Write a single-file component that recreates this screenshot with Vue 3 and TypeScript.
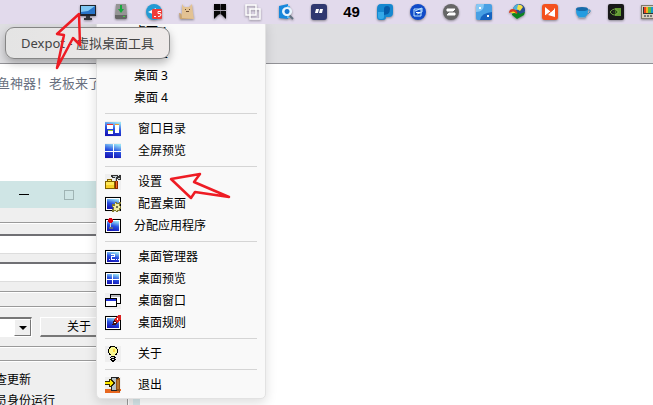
<script setup lang="ts">
type Shape = { d: string; f?: string; s?: string; w?: number }
type MenuEntry = { label: string; icon?: string; near?: boolean }

const screen: Shape[] = [
  { d: 'M0 1h16v14H0z', f: '#000' },
  { d: 'M1 2h14v12H1z', f: '#fff' },
  { d: 'M2 3h12v10H2z', f: 'url(#blue)' },
]

const icons: Record<string, Shape[]> = {
  windows: [
    { d: 'M0 1h16v14H0z', f: 'url(#blue)' },
    { d: 'M2 4h6v4H2zM3 9h5v4H3zM10 4h4v8h-4z', f: '#fff' },
    { d: 'M2 3h6v1H2z', f: '#e83030' },
    { d: 'M3 9h5v1H3z', f: '#9ac828' },
    { d: 'M10 3h4v1h-4z', f: '#f0a030' },
  ],
  grid: [
    { d: 'M0 1h16v14H0z', f: 'url(#blue)' },
    { d: 'M8 1h1v14H8zM0 8h16v1H0z', f: '#fff' },
  ],
  tools: [
    { d: 'M0 7h2V5h5v2h3v8H0z', f: '#806000' },
    { d: 'M1 8h8v6H1zM3 6h3v1H3z', f: '#ffe858' },
    { d: 'M1 11h8v3H1z', f: '#f8d028' },
    { d: 'M6 1h6l2 2V1h2v5h-3V5h-1v3h-2V4H7z', f: '#333' },
    { d: 'M8 2h4v1H8zM10 3h1v4h-1zM13 4h2v1h-2z', f: '#c0ccd0' },
    { d: 'M10 7h3v8h-3z', f: '#8c2800' },
    { d: 'M11 7h1v7h-1z', f: '#f06820' },
  ],
  configure: [
    ...screen,
    { d: 'M10 6h2v1h2V6h2v2h-1v2h1v3h-1v2h-2v1h-2v-1H9v1H7v-3h1v-2H7V8h3z', f: '#807a30' },
    { d: 'M10 7h1v1h3v2h1v2h-1v2h-2v1h-1v-1H9v-3H8v-1h2z', f: '#f0eca0' },
    { d: 'M11 10h2v2h-2z', f: '#707050' },
  ],
  assign: [
    ...screen,
    { d: 'M5 4h1v6H5z', f: '#d0d8e0' },
    { d: 'M4 9h4v2H4z', f: '#606878' },
    { d: 'M4 0h3v1h1v3H7v1H4V4H3V1h1z', f: '#e00010' },
  ],
  manager: [
    ...screen,
    { d: 'M4 10h1v1H4zM6 5h4v3H7v2h3v1H6V7h3V6H6zM11 10h1v1h-1zM13 10h1v1h-1z', f: '#fff' },
  ],
  preview: [...screen, { d: 'M7 3h1v10H7zM2 8h12v1H2z', f: '#fff' }],
  stack: [
    { d: 'M5 1h11v10H5z', f: '#000' },
    { d: 'M6 2h9v8H6z', f: '#fff' },
    { d: 'M6 2h9v2H6z', f: '#bbb' },
    { d: 'M0 5h12v9H0z', f: '#000' },
    { d: 'M1 6h10v7H1z', f: '#fff' },
    { d: 'M1 6h10v2H1z', f: '#2030d8' },
  ],
  rules: [
    ...screen,
    { d: 'M13 0h3v4l-4 4-3-3z', f: '#d82020' },
    { d: 'M9 5l3 3-1 2H7z', f: '#401010' },
    { d: 'M9 7h2v1H9zM12 3h1v2h-1z', f: '#fff' },
  ],
  bulb: [
    { d: 'M5 0h5v1h2v2h1v4h-1v2h-2v2h1v1h-1v1h1v1h-1v1H9v1H7v-1H6v-1H5v-1h1v-1H5v-1h1V9H4V7H3V3h1V1h1z', f: '#000' },
    { d: 'M6 1h4v1h1v1h1v4h-1v1h-1v2H6V8H5V7H4V3h1V2h1z', f: '#f8f890' },
    { d: 'M8 3h2v3H8z', f: '#ffd840' },
    { d: 'M6 11h3v1H6zM7 13h2v1H7z', f: '#ddd' },
  ],
  exit: [
    { d: 'M0 12h16l-1 4H0z', f: '#e86820' },
    { d: 'M6 0h8v14H6z', f: '#222' },
    { d: 'M7 1h4v12H7z', f: '#b8c4c8' },
    { d: 'M11 2l4-1v14l-4-2z', f: '#905018' },
    { d: 'M12 3h2v9h-2z', f: '#b87830' },
    { d: 'M0 4h4V2h2l4 4-4 4H4V8H0z', f: '#302800' },
    { d: 'M0 5h5V3l3 3-3 3V7H0z', f: '#ffe800' },
  ],
}

const tray: { name: string; shapes: Shape[]; text?: string }[] = [
  {
    name: 'Dexpot',
    shapes: [
      { d: 'M0 1h16v11H0z', f: '#20242c' },
      { d: 'M1 2h14v8H1z', f: '#2874c8' },
      { d: 'M1 2h14L8 7 1 8z', f: '#80c8f4' },
      { d: 'M6 12h4v2h2v2H4v-2h2z', f: '#30343a' },
    ],
  },
  {
    name: 'Disk',
    shapes: [
      { d: 'M3 0h10l1 11H2z', f: '#959595' },
      { d: 'M2 11h12v3l-1 1H3l-1-1z', f: '#666' },
      { d: 'M7 1h2v4h2L8 9 5 5h2z', f: '#18a840' },
      { d: 'M10 12h2v1h-2z', f: '#4c4' },
    ],
  },
  {
    name: 'Telegram',
    shapes: [
      { d: 'M8 0a8 8 0 1 0 0 16A8 8 0 1 0 8 0z', f: '#249bd4' },
      { d: 'M2 8l8-4-1 7z', f: '#fff' },
      { d: 'M7 5h8q1 0 1 1v8q0 1-1 1H7q-1 0-1-1V6q0-1 1-1z', f: '#f03c38' },
      { d: 'M8 12.500h2M15 7.500h-3v2h2q1 0 1 1.500t-3 1.500', s: '#fff', w: 1 },
    ],
  },
  {
    name: 'Cat',
    shapes: [
      { d: 'M3 0l2 3h5l3-3 1 9 1 6H1l2-6z', f: '#e3c293' },
      { d: 'M0 9q3 0 3 5l12 1H1z', f: '#caa571' },
      { d: 'M6 5h1v1H6zM10 5h1v1h-1zM7 7h3v1H7z', f: '#6b4c30' },
    ],
  },
  {
    name: 'Bookmarks',
    shapes: [{ d: 'M2 0h6v6H2zM8.500 0h5.500v6H8.500zM2 7h6v3l-2 1-4 4zM8.500 7h5.500v8l-4-4-1.500-1z', f: '#050505' }],
  },
  {
    name: 'Layers',
    shapes: [{ d: 'M1 1h10v10H1zM5 5h10v10H5z', s: '#fff', w: 1.5 }],
  },
  {
    name: 'Search',
    shapes: [
      { d: 'M1 2l9-2v15l-9-1z', f: '#1688dc' },
      { d: 'M9 2h3v12H9z', f: '#5cb8f0' },
      { d: 'M11 11l4 4', s: '#607080', w: 2 },
      { d: 'M9 3a5 4.500 0 1 0 .1 0z', f: '#e8f4fc' },
      { d: 'M9 5a2.500 2.500 0 1 0 .1 0z', f: '#1878d0' },
    ],
  },
  {
    name: 'Quote',
    shapes: [
      { d: 'M3 0h10q3 0 3 3v10q0 3-3 3H3q-3 0-3-3V3q0-3 3-3z', f: '#303870' },
      { d: 'M5 5h3l-1 4H4zM9 5h3l-1 4H8z', f: '#fff' },
    ],
  },
  { name: 'Temperature', shapes: [], text: '49' },
  {
    name: 'Player',
    shapes: [
      { d: 'M4 0h9q3 0 3 3v6q0 4-4 4h-3q0 3-3 3H3q-3 0-3-3V5q0-5 4-5z', f: '#1688d0' },
      { d: 'M7 5q0-3 3-3t3 3-2 5l-4 1z', f: '#075ba8' },
      { d: 'M1 8h6v5q0 2-2 2H3q-2 0-2-2z', f: '#35a9e8' },
    ],
  },
  {
    name: 'Cloud',
    shapes: [
      { d: 'M8 0a8 8 0 1 0 0 16A8 8 0 1 0 8 0z', f: '#104bc8' },
      { d: 'M4 5h7v7H4zM5 7l7-3v4l-5 2', s: '#c0e8ff', w: 1 },
      { d: 'M6 8h4v1H6z', f: '#fff' },
    ],
  },
  {
    name: 'Sync',
    shapes: [
      { d: 'M8 0a8 8 0 1 0 0 16A8 8 0 1 0 8 0z', f: '#666' },
      { d: 'M4 5h8l-2 2H4zM12 11H4l2-2h6z', f: '#fff', s: '#fff', w: 1 },
    ],
  },
  {
    name: 'Bubbles',
    shapes: [
      { d: 'M2 0h12q2 0 2 2v12q0 2-2 2H2q-2 0-2-2V2q0-2 2-2z', f: '#48a0e4' },
      { d: 'M0 2q0-2 2-2h6q0 8-8 8z', f: '#86c8f4' },
      { d: 'M16 8v6q0 2-2 2H4q1-7 12-8z', f: '#1764c0' },
      { d: 'M3 3h2v2H3zM11 11h2v2h-2z', f: '#fff' },
    ],
  },
  {
    name: 'Download manager',
    shapes: [
      { d: 'M10 0a6 6 0 1 0 .1 0z', f: '#284c90' },
      { d: 'M4 6q0-5 6-6l-1 6z', f: '#50b0d8' },
      { d: 'M9 1q3-1 5 2l-3 4-3-2z', f: '#f4e048' },
      { d: 'M0 9q0-4 4-4t5 6H6Q4 7 0 9z', f: '#d83c20' },
      { d: 'M1 9q4-4 7 2H6Q4 8 1 9z', f: '#f4e020' },
      { d: 'M3 10q2-2 5 0l1-2 2 2 5-2-1 3-7 4-5-4z', f: '#0c8420' },
    ],
  },
  {
    name: 'Remote',
    shapes: [
      { d: 'M3 0h10q3 0 3 3v10q0 3-3 3H3q-3 0-3-3V3q0-3 3-3z', f: '#f4511e' },
      { d: 'M3 3l6 5-6 4zM13 4v9L6 11z', f: '#fff' },
      { d: 'M3 12l9-7', s: '#f4511e', w: 1 },
    ],
  },
  {
    name: 'Coffee',
    shapes: [
      { d: 'M12 6h3v2q-1 2-4 2', s: '#3889b8', w: 1 },
      { d: 'M1 5q0 8 4 8h4q4 0 4-8z', f: '#259ce0' },
      { d: 'M1 5q0-2 6-2t6 2-6 2-6-2z', f: '#176baa' },
      { d: 'M3 13h8v1H3z', f: '#78aac8' },
    ],
  },
  {
    name: 'NVIDIA',
    shapes: [
      { d: 'M2 0h12q2 0 2 2v12q0 2-2 2H2q-2 0-2-2V2q0-2 2-2z', f: '#181818' },
      { d: 'M7 4h6v8H7z', f: '#639a32' },
      { d: 'M2 8q5-6 9 0-5 6-9 0z', s: '#72a442', w: 1 },
      { d: 'M5 8q2-3 4 0-2 3-4 0z', s: '#254015', w: 1 },
    ],
  },
  {
    name: 'Palette',
    shapes: [
      { d: 'M0 1h16v14H0z', f: '#80796d' },
      { d: 'M1 2h15v12H1z', f: '#d8d0c0' },
      { d: 'M2 3h14v7H2z', f: '#333' },
      { d: 'M3 3h2v6H3z', f: '#e84020' },
      { d: 'M5 3h2v6H5z', f: '#f8b020' },
      { d: 'M7 3h3v6H7z', f: '#58b848' },
      { d: 'M10 3h3v6h-3z', f: '#189ac8' },
      { d: 'M13 3h3v6h-3z', f: '#4050c8' },
      { d: 'M3 11h2v2H3zM6 11h2v2H6zM9 11h2v2H9zM12 11h2v2h-2z', f: '#777' },
    ],
  },
]

const groups: MenuEntry[][] = [
  [
    { label: '桌面 1', near: true },
    { label: '桌面 2', near: true },
    { label: '桌面 3', near: true },
    { label: '桌面 4', near: true },
  ],
  [
    { label: '窗口目录', icon: 'windows' },
    { label: '全屏预览', icon: 'grid' },
  ],
  [
    { label: '设置', icon: 'tools' },
    { label: '配置桌面', icon: 'configure' },
    { label: '分配应用程序', icon: 'assign', near: true },
  ],
  [
    { label: '桌面管理器', icon: 'manager' },
    { label: '桌面预览', icon: 'preview' },
    { label: '桌面窗口', icon: 'stack' },
    { label: '桌面规则', icon: 'rules' },
  ],
  [{ label: '关于', icon: 'bulb' }],
  [{ label: '退出', icon: 'exit' }],
]
</script>

<template>
  <div class="desktop">
    <svg class="defs" width="0" height="0" aria-hidden="true">
      <linearGradient id="blue" x1="0.7" y1="0" x2="0.4" y2="1">
        <stop offset="0" stop-color="#98e4f8" />
        <stop offset="0.5" stop-color="#2850e0" />
        <stop offset="1" stop-color="#1818b8" />
      </linearGradient>
    </svg>

    <header class="tray">
      <button v-for="item in tray" :key="item.name" class="tray-item" type="button" :aria-label="item.name">
        <span v-if="item.text" class="reading">{{ item.text }}</span>
        <svg v-else class="tray-icon" viewBox="0 0 16 16" aria-hidden="true">
          <path v-for="(p, i) in item.shapes" :key="i" :d="p.d" :fill="p.f ?? 'none'" :stroke="p.s ?? 'none'" :stroke-width="p.w ?? 0" />
        </svg>
      </button>
    </header>
    <div class="toolbar"></div>

    <main class="page">
      <p class="article">鱼神器！老板来了</p>
    </main>

    <section class="window">
      <div class="titlebar">
        <button type="button" class="caption" aria-label="最小化"><span class="minimize"></span></button>
        <button type="button" class="caption" aria-label="最大化"><span class="maximize"></span></button>
      </div>
      <div class="dialog">
        <div class="group">
          <input class="field" type="text" aria-label="名称" />
          <input class="field" type="text" aria-label="路径" />
        </div>
        <div class="group actions">
          <div class="combo">
            <select aria-label="选项"><option></option></select>
            <span class="drop"></span>
          </div>
          <button class="about" type="button">关于</button>
        </div>
        <div class="group options">
          <p>查更新</p>
          <p>员身份运行</p>
        </div>
      </div>
    </section>

    <nav class="menu" aria-label="Dexpot">
      <ul v-for="(group, g) in groups" :key="g" class="menu-group">
        <li v-for="item in group" :key="item.label">
          <button type="button" class="menu-item">
            <span class="menu-icon" :class="{ near: item.near }">
              <svg v-if="item.icon" viewBox="0 0 16 16" shape-rendering="crispEdges" aria-hidden="true">
                <path v-for="(p, i) in icons[item.icon]" :key="i" :d="p.d" :fill="p.f" />
              </svg>
            </span>
            <span>{{ item.label }}</span>
          </button>
        </li>
      </ul>
    </nav>

    <div class="tooltip" role="tooltip">Dexpot - 虚拟桌面工具</div>

    <svg class="mark mark-tray" viewBox="0 0 32 64" aria-hidden="true">
      <path d="M25 6L3 26l7 1L3 60l16-30 7 7z" stroke-width="2.5" />
    </svg>
    <svg class="mark mark-settings" viewBox="0 0 64 32" aria-hidden="true">
      <path d="M3 7l29-5-6 8 35 15-34-5-4 6z" stroke-width="2.5" />
    </svg>
  </div>
</template>

<style>
body {
  margin: 0;
}
</style>

<style scoped>
.desktop {
  position: relative;
  display: flex;
  flex-direction: column;
  min-height: 100vh;
  overflow: hidden;
  background: #fff;
  color: #000;
  font: 12px/22px "Noto Sans", "Noto Sans CJK SC", sans-serif;
}
button {
  padding: 0;
  border: 0;
  background: none;
  color: inherit;
  font: inherit;
}
p,
ul {
  margin: 0;
  padding: 0;
  list-style: none;
}
.defs {
  position: absolute;
}
.tray {
  position: relative;
  z-index: 3;
  display: flex;
  flex-shrink: 0;
  height: 24px;
  padding-left: 71px;
  background: #e2daec;
}
.tray-item {
  display: flex;
  flex: 0 0 33px;
  align-items: center;
  justify-content: center;
}
.tray-icon {
  width: 16px;
  height: 16px;
  filter: drop-shadow(0 1px 1px #0006);
}
.reading {
  font: bold 15px/24px "Liberation Sans", sans-serif;
}
.toolbar {
  flex-shrink: 0;
  height: 39px;
  border-bottom: 1px solid #919196;
  background: #dedee1;
}
.page {
  flex: 1;
  padding-top: 8px;
}
.article {
  margin-left: -3px;
  color: #687080;
  font-size: 13px;
}
.window {
  position: absolute;
  top: 181px;
  left: -20px;
  width: 153px;
  border-right: 7px solid #d4e5e8;
  background: #efefef;
}
.titlebar {
  display: flex;
  height: 27px;
  padding-left: 21px;
  background: #cfe5e5;
}
.caption {
  display: flex;
  width: 45px;
  align-items: center;
  justify-content: center;
}
.minimize {
  width: 10px;
  height: 1px;
  background: #000;
}
.maximize {
  width: 8px;
  height: 8px;
  border: 1px solid #a0b4b4;
}
.dialog {
  display: flex;
  flex-direction: column;
  gap: 13px;
  padding: 14px 5px 0 0;
}
.group {
  display: flex;
  flex-direction: column;
  gap: 8px;
  padding: 11px 8px 9px 14px;
  border: 1px solid #9a9a9a;
  box-shadow: inset 0 1px #fff, 0 1px #fff, 1px 0 #fff;
}
.field {
  box-sizing: border-box;
  width: 100%;
  height: 20px;
  border: 1px solid #ddd;
  border-top: 2px solid #707074;
  border-radius: 0;
  background: #fff;
  outline: none;
}
.actions {
  flex-direction: row;
  margin-top: 1px;
  padding: 10px 8px 9px 14px;
}
.combo {
  display: flex;
  box-sizing: border-box;
  flex: 0 0 37px;
  height: 20px;
  border: 2px solid #777;
  border-right: 1px solid #fff;
  border-bottom: 1px solid #fff;
  background: #fff;
}
.combo select {
  flex: 1;
  min-width: 0;
  padding: 0;
  border: 0;
  background: #fff;
  appearance: none;
}
.drop {
  display: flex;
  box-sizing: border-box;
  width: 17px;
  align-items: center;
  justify-content: center;
  border: 1px solid #fff;
  border-right-color: #777;
  border-bottom-color: #777;
  background: #efefef;
}
.drop::after {
  border: 4px solid transparent;
  border-top-color: #000;
  border-bottom: 0;
  content: "";
}
.about {
  box-sizing: border-box;
  flex: 0 0 78px;
  height: 20px;
  border: 1px solid #fff;
  border-bottom: 2px solid #777;
  line-height: 17px;
}
.options {
  gap: 0;
  padding: 8px 8px 0 14px;
}
.options p {
  line-height: 21px;
}
.menu {
  position: absolute;
  z-index: 2;
  top: 20px;
  left: 96px;
  box-sizing: border-box;
  width: 170px;
  padding: 0 8px 2px;
  border: 1px solid #e2e2e2;
  border-radius: 5px;
  background: #f9f9f9;
  box-shadow: 0 4px 12px #0002;
}
.menu-group + .menu-group {
  margin-top: 4px;
  padding-top: 4px;
  border-top: 1px solid #d5d5d5;
}
.menu-item {
  display: flex;
  width: 100%;
  height: 22px;
  align-items: center;
  text-align: left;
}
.menu-icon {
  display: flex;
  width: 33px;
}
.menu-icon.near {
  width: 29px;
}
.menu-icon svg {
  width: 16px;
  height: 16px;
  background: #efefef;
}
.tooltip {
  position: absolute;
  z-index: 4;
  top: 27px;
  left: 5px;
  padding: 4px 15px;
  border: 1px solid #858585;
  border-radius: 9px;
  background: linear-gradient(90deg, #e4e4e4, #eee9e8);
  box-shadow: 0 4px 9px #0004;
  color: #444;
  font-size: 13px;
  white-space: nowrap;
}
.mark {
  position: absolute;
  z-index: 5;
  fill: none;
  stroke: #ee1c24;
  stroke-linejoin: round;
}
.mark-tray {
  top: 8px;
  left: 54px;
  width: 32px;
  height: 64px;
}
.mark-settings {
  top: 172px;
  left: 168px;
  width: 64px;
  height: 32px;
}
</style>
